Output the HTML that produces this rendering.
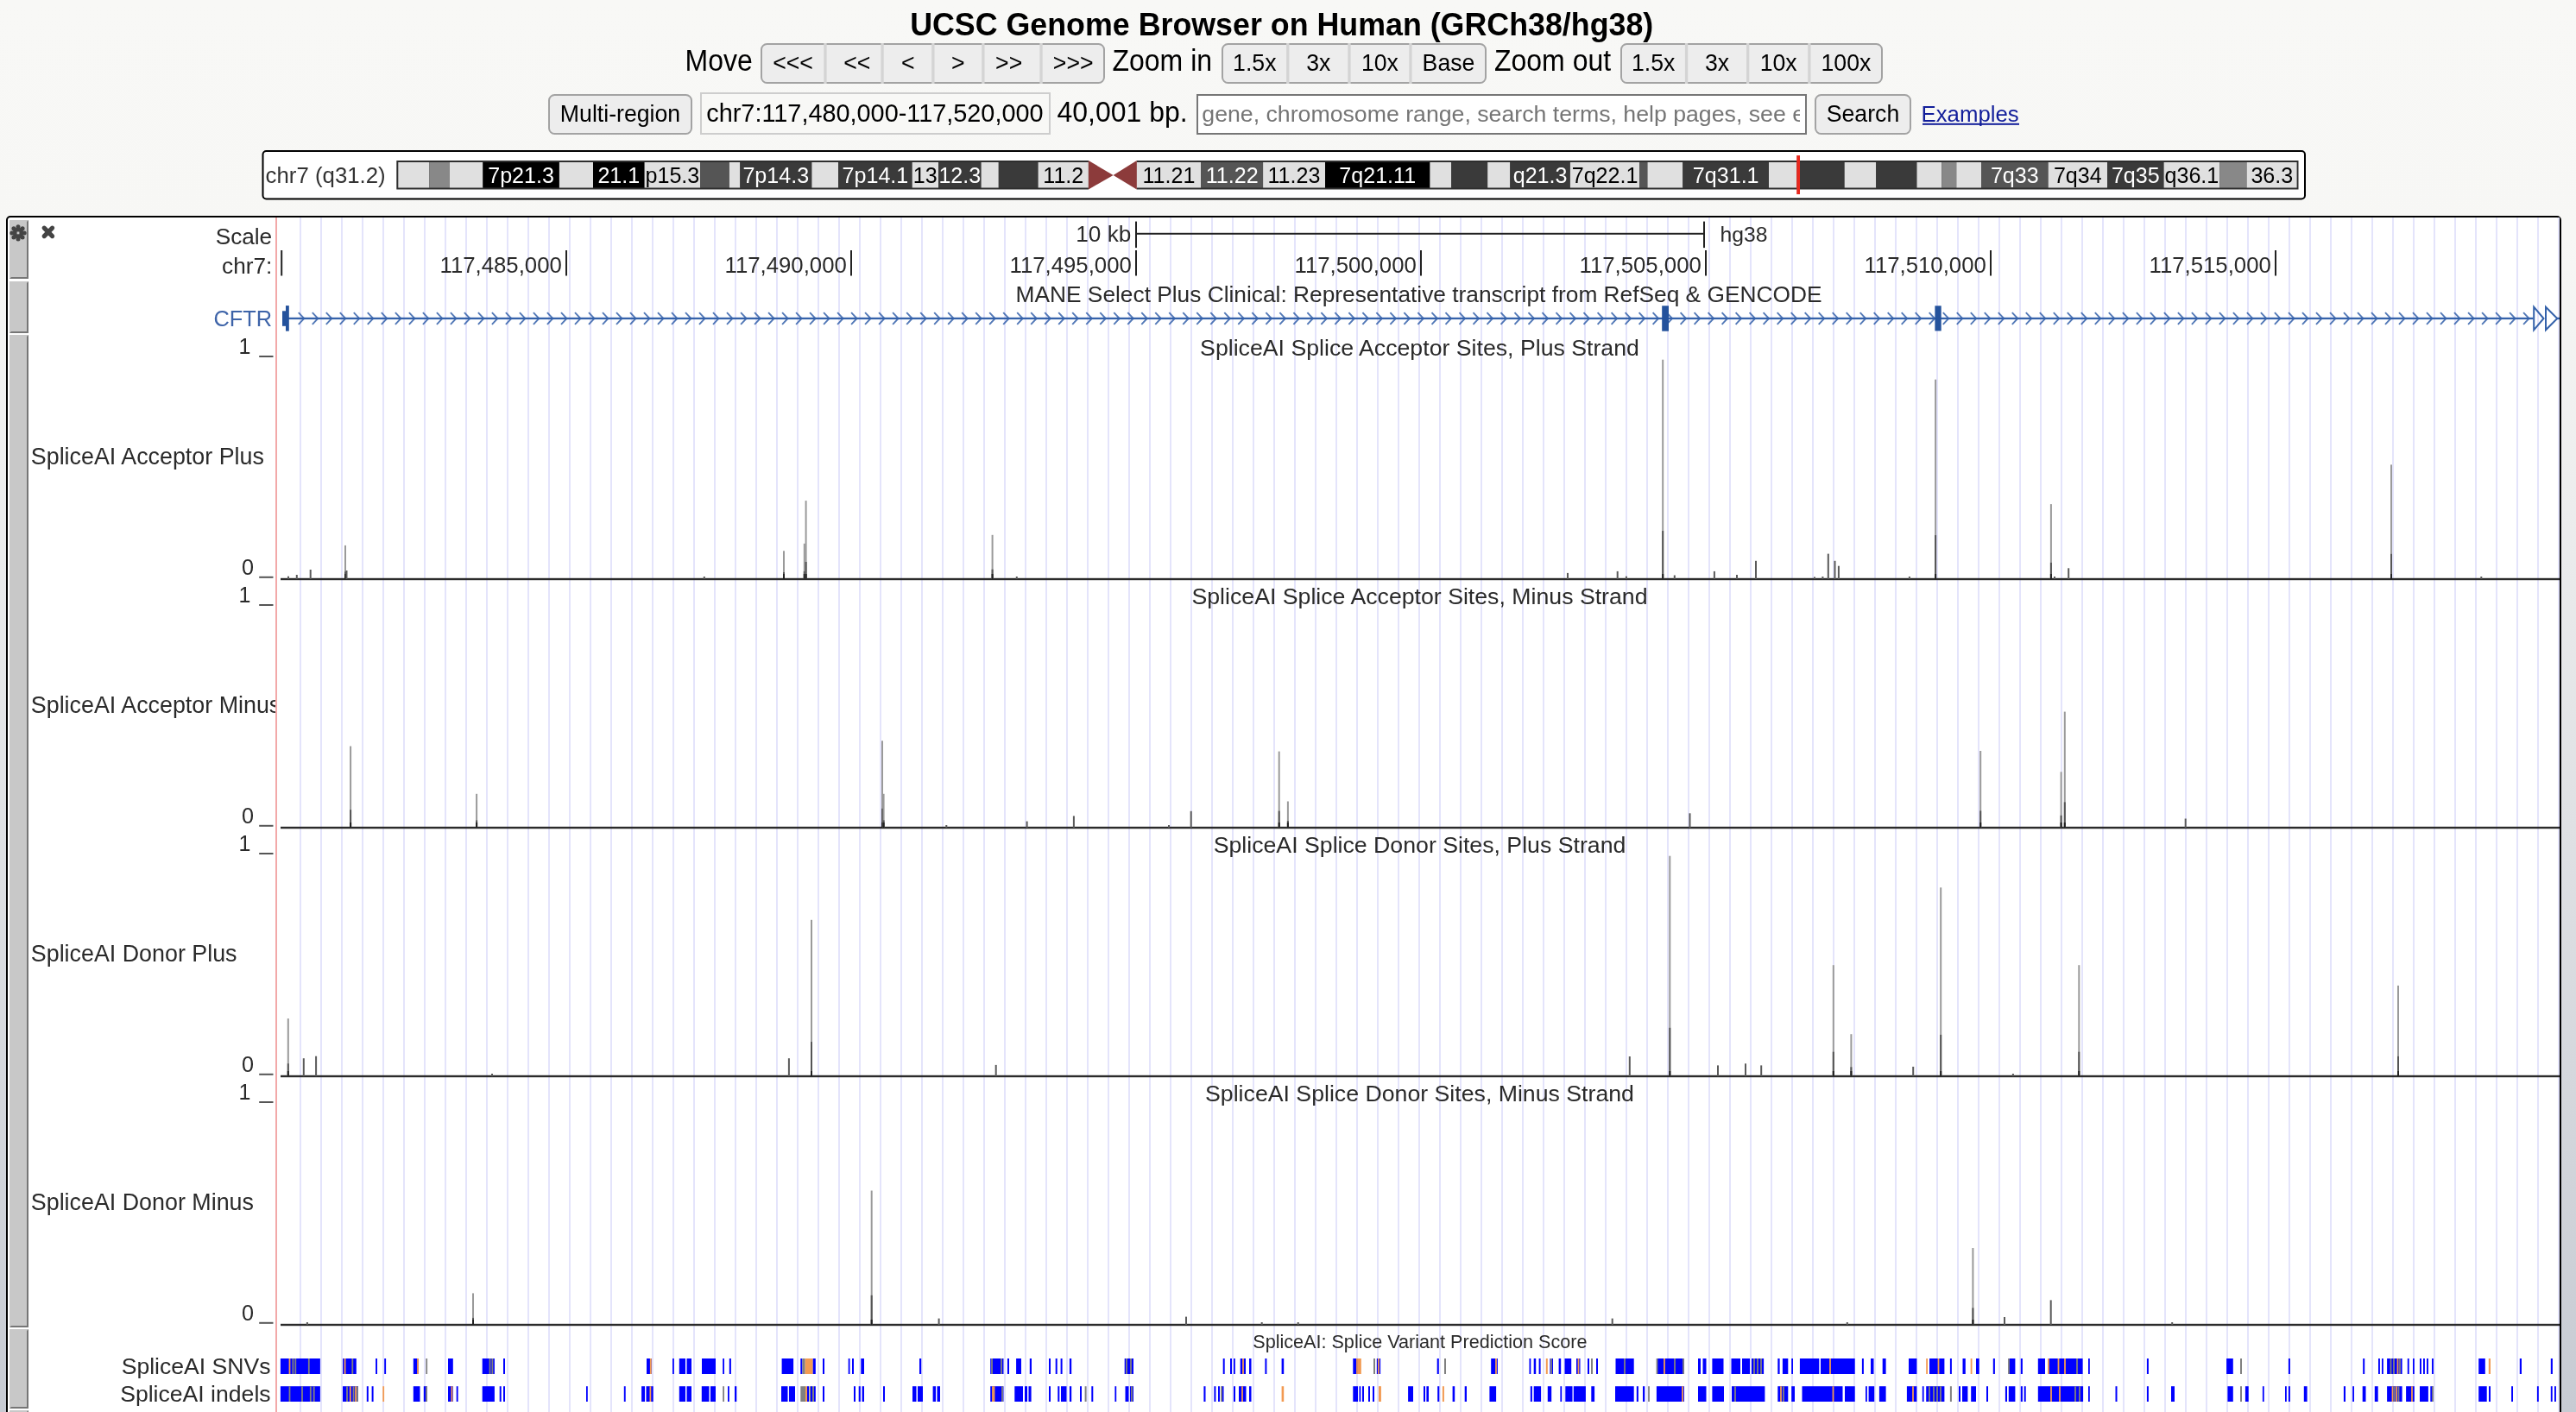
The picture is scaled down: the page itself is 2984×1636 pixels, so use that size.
<!DOCTYPE html><html><head><meta charset="utf-8"><title>UCSC Genome Browser</title>
<style>html,body{margin:0;padding:0;width:2984px;height:1636px;overflow:hidden;background:#f8f8f6;}svg{display:block;font-family:"Liberation Sans",sans-serif;will-change:transform;}</style></head><body>
<svg width="2984" height="1636" viewBox="0 0 2984 1636">
<defs><linearGradient id="bg" x1="0" y1="0" x2="0" y2="1636" gradientUnits="userSpaceOnUse"><stop offset="0" stop-color="#f8f8f6"/><stop offset="0.17" stop-color="#f7f7f5"/><stop offset="1" stop-color="#c7cbd3"/></linearGradient><clipPath id="srch"><rect x="1388" y="111" width="697" height="43"/></clipPath><clipPath id="lbl"><rect x="34" y="252" width="285" height="1400"/></clipPath></defs>
<rect x="0" y="0" width="2984" height="1636" fill="url(#bg)"/>
<text x="1484.7" y="41.3" font-size="35.8" fill="#000" text-anchor="middle" font-weight="bold"  transform="matrix(1,0,0,1.035,0,-1.445)">UCSC Genome Browser on Human (GRCh38/hg38)</text>
<text x="793.5" y="81.8" font-size="32" fill="#000" text-anchor="start" font-weight="normal"  transform="matrix(1,0,0,1.07,0,-5.726)">Move</text>
<rect x="882" y="51" width="397" height="45" rx="6.5" ry="6.5" fill="#ededed" stroke="#a3a3a3" stroke-width="2"/><rect x="954.3" y="50" width="3.3" height="47" fill="#d4d4d4"/><rect x="1020.4" y="50" width="3.3" height="47" fill="#d4d4d4"/><rect x="1079.2" y="50" width="3.3" height="47" fill="#d4d4d4"/><rect x="1137.2" y="50" width="3.3" height="47" fill="#d4d4d4"/><rect x="1204.4" y="50" width="3.3" height="47" fill="#d4d4d4"/><text x="918.5" y="82" font-size="26.67" fill="#000" text-anchor="middle" font-weight="normal"  transform="matrix(1,0,0,1.06,0,-4.920)">&lt;&lt;&lt;</text><text x="992.8" y="82" font-size="26.67" fill="#000" text-anchor="middle" font-weight="normal"  transform="matrix(1,0,0,1.06,0,-4.920)">&lt;&lt;</text><text x="1051.7" y="82" font-size="26.67" fill="#000" text-anchor="middle" font-weight="normal"  transform="matrix(1,0,0,1.06,0,-4.920)">&lt;</text><text x="1109.8" y="82" font-size="26.67" fill="#000" text-anchor="middle" font-weight="normal"  transform="matrix(1,0,0,1.06,0,-4.920)">&gt;</text><text x="1168.7" y="82" font-size="26.67" fill="#000" text-anchor="middle" font-weight="normal"  transform="matrix(1,0,0,1.06,0,-4.920)">&gt;&gt;</text><text x="1243.2" y="82" font-size="26.67" fill="#000" text-anchor="middle" font-weight="normal"  transform="matrix(1,0,0,1.06,0,-4.920)">&gt;&gt;&gt;</text>
<text x="1288.5" y="81.8" font-size="32" fill="#000" text-anchor="start" font-weight="normal"  transform="matrix(1,0,0,1.07,0,-5.726)">Zoom in</text>
<rect x="1416" y="51" width="305" height="45" rx="6.5" ry="6.5" fill="#ededed" stroke="#a3a3a3" stroke-width="2"/><rect x="1490.1" y="50" width="3.3" height="47" fill="#d4d4d4"/><rect x="1561.3" y="50" width="3.3" height="47" fill="#d4d4d4"/><rect x="1632.3" y="50" width="3.3" height="47" fill="#d4d4d4"/><text x="1453.3" y="82" font-size="26.67" fill="#000" text-anchor="middle" font-weight="normal"  transform="matrix(1,0,0,1.06,0,-4.920)">1.5x</text><text x="1527.3" y="82" font-size="26.67" fill="#000" text-anchor="middle" font-weight="normal"  transform="matrix(1,0,0,1.06,0,-4.920)">3x</text><text x="1598.4" y="82" font-size="26.67" fill="#000" text-anchor="middle" font-weight="normal"  transform="matrix(1,0,0,1.06,0,-4.920)">10x</text><text x="1678.0" y="82" font-size="26.67" fill="#000" text-anchor="middle" font-weight="normal"  transform="matrix(1,0,0,1.06,0,-4.920)">Base</text>
<text x="1731" y="81.8" font-size="32" fill="#000" text-anchor="start" font-weight="normal"  transform="matrix(1,0,0,1.07,0,-5.726)">Zoom out</text>
<rect x="1878" y="51" width="302" height="45" rx="6.5" ry="6.5" fill="#ededed" stroke="#a3a3a3" stroke-width="2"/><rect x="1951.9" y="50" width="3.3" height="47" fill="#d4d4d4"/><rect x="2023.0" y="50" width="3.3" height="47" fill="#d4d4d4"/><rect x="2094.2" y="50" width="3.3" height="47" fill="#d4d4d4"/><text x="1915.2" y="82" font-size="26.67" fill="#000" text-anchor="middle" font-weight="normal"  transform="matrix(1,0,0,1.06,0,-4.920)">1.5x</text><text x="1989.0" y="82" font-size="26.67" fill="#000" text-anchor="middle" font-weight="normal"  transform="matrix(1,0,0,1.06,0,-4.920)">3x</text><text x="2060.2" y="82" font-size="26.67" fill="#000" text-anchor="middle" font-weight="normal"  transform="matrix(1,0,0,1.06,0,-4.920)">10x</text><text x="2138.4" y="82" font-size="26.67" fill="#000" text-anchor="middle" font-weight="normal"  transform="matrix(1,0,0,1.06,0,-4.920)">100x</text>
<rect x="636" y="110" width="165" height="45" rx="6.5" ry="6.5" fill="#ededed" stroke="#a3a3a3" stroke-width="2"/><text x="718.5" y="141" font-size="26.67" fill="#000" text-anchor="middle" font-weight="normal"  transform="matrix(1,0,0,1.06,0,-8.460)">Multi-region</text>
<rect x="812" y="108" width="404" height="47" fill="#f8f8f6" stroke="#cdcdcd" stroke-width="2"/>
<text x="818.3" y="141.3" font-size="28.85" fill="#000" text-anchor="start" font-weight="normal" >chr7:117,480,000-117,520,000</text>
<text x="1224.5" y="141" font-size="32" fill="#000" text-anchor="start" font-weight="normal"  transform="matrix(1,0,0,1.06,0,-8.460)">40,001 bp.</text>
<rect x="1387" y="110" width="705" height="45" fill="#ffffff" stroke="#767676" stroke-width="2"/>
<g clip-path="url(#srch)"><text x="1392.3" y="141.3" font-size="26.7" fill="#757575" text-anchor="start" font-weight="normal" >gene, chromosome range, search terms, help pages, see examples</text></g>
<rect x="2103" y="110" width="110" height="45" rx="6.5" ry="6.5" fill="#ededed" stroke="#a3a3a3" stroke-width="2"/><text x="2158.0" y="141" font-size="26.67" fill="#000" text-anchor="middle" font-weight="normal"  transform="matrix(1,0,0,1.06,0,-8.460)">Search</text>
<text x="2225.5" y="141" font-size="25.8" fill="#121e9a" text-anchor="start" font-weight="normal"  transform="matrix(1,0,0,1.03,0,-4.230)">Examples</text>
<rect x="2227" y="142.8" width="112" height="2" fill="#121e9a"/>
<rect x="304.5" y="175" width="2365.5" height="55.5" rx="4" ry="4" fill="#ffffff" stroke="#000" stroke-width="2"/>
<text x="307.6" y="211.6" font-size="25.8" fill="#333" text-anchor="start" font-weight="normal" >chr7 (q31.2)</text>
<rect x="459.3" y="186" width="801.6000000000001" height="33.5" fill="#2e2e2e"/>
<rect x="1316.8" y="186" width="1345.7" height="33.5" fill="#2e2e2e"/>
<rect x="461.3" y="188" width="36.0" height="29.5" fill="#e0e0e0"/>
<rect x="497.3" y="188" width="23.6" height="29.5" fill="#888888"/>
<rect x="520.9" y="188" width="38.5" height="29.5" fill="#e0e0e0"/>
<rect x="559.4" y="188" width="88.5" height="29.5" fill="#000000"/>
<text x="603.6" y="211.6" font-size="25.1" fill="#fff" text-anchor="middle" font-weight="normal" >7p21.3</text>
<rect x="647.9" y="188" width="39.1" height="29.5" fill="#e0e0e0"/>
<rect x="687" y="188" width="59.6" height="29.5" fill="#000000"/>
<text x="716.8" y="211.6" font-size="25.1" fill="#fff" text-anchor="middle" font-weight="normal" >21.1</text>
<rect x="746.6" y="188" width="64.6" height="29.5" fill="#e0e0e0"/>
<text x="778.9" y="211.6" font-size="25.1" fill="#000" text-anchor="middle" font-weight="normal" >p15.3</text>
<rect x="811.2" y="188" width="33.7" height="29.5" fill="#555555"/>
<rect x="844.9" y="188" width="12.4" height="29.5" fill="#e0e0e0"/>
<rect x="857.3" y="188" width="83.1" height="29.5" fill="#3a3a3a"/>
<text x="898.8" y="211.6" font-size="25.1" fill="#fff" text-anchor="middle" font-weight="normal" >7p14.3</text>
<rect x="940.4" y="188" width="30.7" height="29.5" fill="#e0e0e0"/>
<rect x="971.1" y="188" width="85.6" height="29.5" fill="#3a3a3a"/>
<text x="1013.9" y="211.6" font-size="25.1" fill="#fff" text-anchor="middle" font-weight="normal" >7p14.1</text>
<rect x="1056.7" y="188" width="30.3" height="29.5" fill="#e0e0e0"/>
<text x="1071.8" y="211.6" font-size="25.1" fill="#000" text-anchor="middle" font-weight="normal" >13</text>
<rect x="1087" y="188" width="49.6" height="29.5" fill="#3a3a3a"/>
<text x="1111.8" y="211.6" font-size="25.1" fill="#fff" text-anchor="middle" font-weight="normal" >12.3</text>
<rect x="1136.6" y="188" width="20.2" height="29.5" fill="#e0e0e0"/>
<rect x="1156.8" y="188" width="45.8" height="29.5" fill="#3a3a3a"/>
<rect x="1202.6" y="188" width="58.3" height="29.5" fill="#e0e0e0"/>
<text x="1231.8" y="211.6" font-size="25.1" fill="#000" text-anchor="middle" font-weight="normal" >11.2</text>
<rect x="1316.8" y="188" width="74.4" height="29.5" fill="#e0e0e0"/>
<text x="1354.0" y="211.6" font-size="25.1" fill="#000" text-anchor="middle" font-weight="normal" >11.21</text>
<rect x="1391.2" y="188" width="71.9" height="29.5" fill="#555555"/>
<text x="1427.2" y="211.6" font-size="25.1" fill="#fff" text-anchor="middle" font-weight="normal" >11.22</text>
<rect x="1463.1" y="188" width="71.9" height="29.5" fill="#e0e0e0"/>
<text x="1499.0" y="211.6" font-size="25.1" fill="#000" text-anchor="middle" font-weight="normal" >11.23</text>
<rect x="1535" y="188" width="121.4" height="29.5" fill="#000000"/>
<text x="1595.7" y="211.6" font-size="25.1" fill="#fff" text-anchor="middle" font-weight="normal" >7q21.11</text>
<rect x="1656.4" y="188" width="24.8" height="29.5" fill="#e0e0e0"/>
<rect x="1681.2" y="188" width="42.0" height="29.5" fill="#3a3a3a"/>
<rect x="1723.2" y="188" width="26.1" height="29.5" fill="#e0e0e0"/>
<rect x="1749.3" y="188" width="69.6" height="29.5" fill="#3a3a3a"/>
<text x="1784.1" y="211.6" font-size="25.1" fill="#fff" text-anchor="middle" font-weight="normal" >q21.3</text>
<rect x="1818.9" y="188" width="80.3" height="29.5" fill="#e0e0e0"/>
<text x="1859.1" y="211.6" font-size="25.1" fill="#000" text-anchor="middle" font-weight="normal" >7q22.1</text>
<rect x="1899.2" y="188" width="9.3" height="29.5" fill="#555555"/>
<rect x="1908.5" y="188" width="40.8" height="29.5" fill="#e0e0e0"/>
<rect x="1949.3" y="188" width="99.7" height="29.5" fill="#3a3a3a"/>
<text x="1999.2" y="211.6" font-size="25.1" fill="#fff" text-anchor="middle" font-weight="normal" >7q31.1</text>
<rect x="2049" y="188" width="32.6" height="29.5" fill="#e0e0e0"/>
<rect x="2081.6" y="188" width="55.1" height="29.5" fill="#3a3a3a"/>
<rect x="2136.7" y="188" width="36.5" height="29.5" fill="#e0e0e0"/>
<rect x="2173.2" y="188" width="47.3" height="29.5" fill="#3a3a3a"/>
<rect x="2220.5" y="188" width="28.8" height="29.5" fill="#e0e0e0"/>
<rect x="2249.3" y="188" width="17.0" height="29.5" fill="#888888"/>
<rect x="2266.3" y="188" width="28.7" height="29.5" fill="#e0e0e0"/>
<rect x="2295" y="188" width="77.7" height="29.5" fill="#555555"/>
<text x="2333.8" y="211.6" font-size="25.1" fill="#fff" text-anchor="middle" font-weight="normal" >7q33</text>
<rect x="2372.7" y="188" width="68.3" height="29.5" fill="#e0e0e0"/>
<text x="2406.8" y="211.6" font-size="25.1" fill="#000" text-anchor="middle" font-weight="normal" >7q34</text>
<rect x="2441" y="188" width="65.6" height="29.5" fill="#3a3a3a"/>
<text x="2473.8" y="211.6" font-size="25.1" fill="#fff" text-anchor="middle" font-weight="normal" >7q35</text>
<rect x="2506.6" y="188" width="64.6" height="29.5" fill="#e0e0e0"/>
<text x="2538.9" y="211.6" font-size="25.1" fill="#000" text-anchor="middle" font-weight="normal" >q36.1</text>
<rect x="2571.2" y="188" width="31.4" height="29.5" fill="#888888"/>
<rect x="2602.6" y="188" width="58.0" height="29.5" fill="#e0e0e0"/>
<text x="2631.8" y="211.6" font-size="25.1" fill="#000" text-anchor="middle" font-weight="normal" >36.3</text>
<polygon points="1260.9,186 1289.6,203 1260.9,219.5" fill="#8c3b3b"/>
<polygon points="1316.8,186 1289.6,203 1316.8,219.5" fill="#8c3b3b"/>
<rect x="2081.2" y="180.1" width="3.8" height="45" fill="#e8281e"/>
<rect x="8" y="251" width="2958" height="1406" rx="4" ry="4" fill="#ffffff" stroke="#000" stroke-width="2"/>
<rect x="11" y="255" width="22" height="68" fill="#c8c8c8"/>
<polygon points="31,257 33,255 33,323 31,323" fill="#767676"/>
<polygon points="11,323 13,321 33,321 33,323" fill="#767676"/>
<rect x="11" y="326" width="22" height="60" fill="#c8c8c8"/>
<polygon points="31,328 33,326 33,386 31,386" fill="#767676"/>
<polygon points="11,386 13,384 33,384 33,386" fill="#767676"/>
<rect x="11" y="388" width="22" height="1150" fill="#c8c8c8"/>
<polygon points="31,390 33,388 33,1538 31,1538" fill="#767676"/>
<polygon points="11,1538 13,1536 33,1536 33,1538" fill="#767676"/>
<rect x="11" y="1540" width="22" height="92" fill="#c8c8c8"/>
<polygon points="31,1542 33,1540 33,1632 31,1632" fill="#767676"/>
<polygon points="11,1632 13,1630 33,1630 33,1632" fill="#767676"/>
<rect x="11" y="1634" width="22" height="66" fill="#c8c8c8"/>
<polygon points="31,1636 33,1634 33,1700 31,1700" fill="#767676"/>
<polygon points="11,1700 13,1698 33,1698 33,1700" fill="#767676"/>
<circle cx="21" cy="269.9" r="6.4" fill="#444"/><circle cx="21.00" cy="262.70" r="2.5" fill="#444"/><circle cx="26.09" cy="264.81" r="2.5" fill="#444"/><circle cx="28.20" cy="269.90" r="2.5" fill="#444"/><circle cx="26.09" cy="274.99" r="2.5" fill="#444"/><circle cx="21.00" cy="277.10" r="2.5" fill="#444"/><circle cx="15.91" cy="274.99" r="2.5" fill="#444"/><circle cx="13.80" cy="269.90" r="2.5" fill="#444"/><circle cx="15.91" cy="264.81" r="2.5" fill="#444"/><rect x="19.6" y="268.5" width="2.8" height="2.8" fill="#c8c8c8"/>
<path d="M51.2,264.2 L60.6,273.6 M60.6,264.2 L51.2,273.6" stroke="#444" stroke-width="5.2" stroke-linecap="round"/>
<rect x="347" y="252" width="2" height="1400" fill="#e4e4fb"/><rect x="371" y="252" width="2" height="1400" fill="#e4e4fb"/><rect x="395" y="252" width="2" height="1400" fill="#e4e4fb"/><rect x="419" y="252" width="2" height="1400" fill="#e4e4fb"/><rect x="443" y="252" width="2" height="1400" fill="#e4e4fb"/><rect x="467" y="252" width="2" height="1400" fill="#e4e4fb"/><rect x="491" y="252" width="2" height="1400" fill="#e4e4fb"/><rect x="515" y="252" width="2" height="1400" fill="#e4e4fb"/><rect x="539" y="252" width="2" height="1400" fill="#e4e4fb"/><rect x="563" y="252" width="2" height="1400" fill="#e4e4fb"/><rect x="587" y="252" width="2" height="1400" fill="#e4e4fb"/><rect x="611" y="252" width="2" height="1400" fill="#e4e4fb"/><rect x="635" y="252" width="2" height="1400" fill="#e4e4fb"/><rect x="659" y="252" width="2" height="1400" fill="#e4e4fb"/><rect x="683" y="252" width="2" height="1400" fill="#e4e4fb"/><rect x="707" y="252" width="2" height="1400" fill="#e4e4fb"/><rect x="731" y="252" width="2" height="1400" fill="#e4e4fb"/><rect x="755" y="252" width="2" height="1400" fill="#e4e4fb"/><rect x="779" y="252" width="2" height="1400" fill="#e4e4fb"/><rect x="803" y="252" width="2" height="1400" fill="#e4e4fb"/><rect x="827" y="252" width="2" height="1400" fill="#e4e4fb"/><rect x="851" y="252" width="2" height="1400" fill="#e4e4fb"/><rect x="875" y="252" width="2" height="1400" fill="#e4e4fb"/><rect x="899" y="252" width="2" height="1400" fill="#e4e4fb"/><rect x="923" y="252" width="2" height="1400" fill="#e4e4fb"/><rect x="947" y="252" width="2" height="1400" fill="#e4e4fb"/><rect x="971" y="252" width="2" height="1400" fill="#e4e4fb"/><rect x="995" y="252" width="2" height="1400" fill="#e4e4fb"/><rect x="1019" y="252" width="2" height="1400" fill="#e4e4fb"/><rect x="1043" y="252" width="2" height="1400" fill="#e4e4fb"/><rect x="1067" y="252" width="2" height="1400" fill="#e4e4fb"/><rect x="1091" y="252" width="2" height="1400" fill="#e4e4fb"/><rect x="1115" y="252" width="2" height="1400" fill="#e4e4fb"/><rect x="1139" y="252" width="2" height="1400" fill="#e4e4fb"/><rect x="1163" y="252" width="2" height="1400" fill="#e4e4fb"/><rect x="1187" y="252" width="2" height="1400" fill="#e4e4fb"/><rect x="1211" y="252" width="2" height="1400" fill="#e4e4fb"/><rect x="1235" y="252" width="2" height="1400" fill="#e4e4fb"/><rect x="1259" y="252" width="2" height="1400" fill="#e4e4fb"/><rect x="1283" y="252" width="2" height="1400" fill="#e4e4fb"/><rect x="1307" y="252" width="2" height="1400" fill="#e4e4fb"/><rect x="1331" y="252" width="2" height="1400" fill="#e4e4fb"/><rect x="1355" y="252" width="2" height="1400" fill="#e4e4fb"/><rect x="1379" y="252" width="2" height="1400" fill="#e4e4fb"/><rect x="1403" y="252" width="2" height="1400" fill="#e4e4fb"/><rect x="1427" y="252" width="2" height="1400" fill="#e4e4fb"/><rect x="1451" y="252" width="2" height="1400" fill="#e4e4fb"/><rect x="1475" y="252" width="2" height="1400" fill="#e4e4fb"/><rect x="1499" y="252" width="2" height="1400" fill="#e4e4fb"/><rect x="1523" y="252" width="2" height="1400" fill="#e4e4fb"/><rect x="1547" y="252" width="2" height="1400" fill="#e4e4fb"/><rect x="1571" y="252" width="2" height="1400" fill="#e4e4fb"/><rect x="1595" y="252" width="2" height="1400" fill="#e4e4fb"/><rect x="1619" y="252" width="2" height="1400" fill="#e4e4fb"/><rect x="1643" y="252" width="2" height="1400" fill="#e4e4fb"/><rect x="1667" y="252" width="2" height="1400" fill="#e4e4fb"/><rect x="1691" y="252" width="2" height="1400" fill="#e4e4fb"/><rect x="1715" y="252" width="2" height="1400" fill="#e4e4fb"/><rect x="1739" y="252" width="2" height="1400" fill="#e4e4fb"/><rect x="1763" y="252" width="2" height="1400" fill="#e4e4fb"/><rect x="1787" y="252" width="2" height="1400" fill="#e4e4fb"/><rect x="1811" y="252" width="2" height="1400" fill="#e4e4fb"/><rect x="1835" y="252" width="2" height="1400" fill="#e4e4fb"/><rect x="1859" y="252" width="2" height="1400" fill="#e4e4fb"/><rect x="1883" y="252" width="2" height="1400" fill="#e4e4fb"/><rect x="1907" y="252" width="2" height="1400" fill="#e4e4fb"/><rect x="1931" y="252" width="2" height="1400" fill="#e4e4fb"/><rect x="1955" y="252" width="2" height="1400" fill="#e4e4fb"/><rect x="1979" y="252" width="2" height="1400" fill="#e4e4fb"/><rect x="2003" y="252" width="2" height="1400" fill="#e4e4fb"/><rect x="2027" y="252" width="2" height="1400" fill="#e4e4fb"/><rect x="2051" y="252" width="2" height="1400" fill="#e4e4fb"/><rect x="2075" y="252" width="2" height="1400" fill="#e4e4fb"/><rect x="2099" y="252" width="2" height="1400" fill="#e4e4fb"/><rect x="2123" y="252" width="2" height="1400" fill="#e4e4fb"/><rect x="2147" y="252" width="2" height="1400" fill="#e4e4fb"/><rect x="2171" y="252" width="2" height="1400" fill="#e4e4fb"/><rect x="2195" y="252" width="2" height="1400" fill="#e4e4fb"/><rect x="2219" y="252" width="2" height="1400" fill="#e4e4fb"/><rect x="2243" y="252" width="2" height="1400" fill="#e4e4fb"/><rect x="2267" y="252" width="2" height="1400" fill="#e4e4fb"/><rect x="2291" y="252" width="2" height="1400" fill="#e4e4fb"/><rect x="2315" y="252" width="2" height="1400" fill="#e4e4fb"/><rect x="2339" y="252" width="2" height="1400" fill="#e4e4fb"/><rect x="2363" y="252" width="2" height="1400" fill="#e4e4fb"/><rect x="2387" y="252" width="2" height="1400" fill="#e4e4fb"/><rect x="2411" y="252" width="2" height="1400" fill="#e4e4fb"/><rect x="2435" y="252" width="2" height="1400" fill="#e4e4fb"/><rect x="2459" y="252" width="2" height="1400" fill="#e4e4fb"/><rect x="2483" y="252" width="2" height="1400" fill="#e4e4fb"/><rect x="2507" y="252" width="2" height="1400" fill="#e4e4fb"/><rect x="2531" y="252" width="2" height="1400" fill="#e4e4fb"/><rect x="2555" y="252" width="2" height="1400" fill="#e4e4fb"/><rect x="2579" y="252" width="2" height="1400" fill="#e4e4fb"/><rect x="2603" y="252" width="2" height="1400" fill="#e4e4fb"/><rect x="2627" y="252" width="2" height="1400" fill="#e4e4fb"/><rect x="2651" y="252" width="2" height="1400" fill="#e4e4fb"/><rect x="2675" y="252" width="2" height="1400" fill="#e4e4fb"/><rect x="2699" y="252" width="2" height="1400" fill="#e4e4fb"/><rect x="2723" y="252" width="2" height="1400" fill="#e4e4fb"/><rect x="2747" y="252" width="2" height="1400" fill="#e4e4fb"/><rect x="2771" y="252" width="2" height="1400" fill="#e4e4fb"/><rect x="2795" y="252" width="2" height="1400" fill="#e4e4fb"/><rect x="2819" y="252" width="2" height="1400" fill="#e4e4fb"/><rect x="2843" y="252" width="2" height="1400" fill="#e4e4fb"/><rect x="2867" y="252" width="2" height="1400" fill="#e4e4fb"/><rect x="2891" y="252" width="2" height="1400" fill="#e4e4fb"/><rect x="2915" y="252" width="2" height="1400" fill="#e4e4fb"/><rect x="2939" y="252" width="2" height="1400" fill="#e4e4fb"/><rect x="2963" y="252" width="2" height="1400" fill="#e4e4fb"/>
<rect x="319" y="252" width="2" height="1400" fill="#f2a9a9"/>
<text x="315.2" y="282.6" font-size="26.2" fill="#2a2a2a" text-anchor="end" font-weight="normal" >Scale</text>
<text x="315.3" y="317" font-size="26.2" fill="#2a2a2a" text-anchor="end" font-weight="normal" >chr7:</text>
<rect x="325.2" y="290" width="2" height="29.5" fill="#222"/>
<rect x="655" y="290" width="2" height="29.5" fill="#222"/>
<text x="650.8" y="316.3" font-size="25.75" fill="#2a2a2a" text-anchor="end" font-weight="normal" >117,485,000</text>
<rect x="985" y="290" width="2" height="29.5" fill="#222"/>
<text x="980.8" y="316.3" font-size="25.75" fill="#2a2a2a" text-anchor="end" font-weight="normal" >117,490,000</text>
<rect x="1315" y="290" width="2" height="29.5" fill="#222"/>
<text x="1310.8" y="316.3" font-size="25.75" fill="#2a2a2a" text-anchor="end" font-weight="normal" >117,495,000</text>
<rect x="1645" y="290" width="2" height="29.5" fill="#222"/>
<text x="1640.8" y="316.3" font-size="25.75" fill="#2a2a2a" text-anchor="end" font-weight="normal" >117,500,000</text>
<rect x="1975" y="290" width="2" height="29.5" fill="#222"/>
<text x="1970.8" y="316.3" font-size="25.75" fill="#2a2a2a" text-anchor="end" font-weight="normal" >117,505,000</text>
<rect x="2305" y="290" width="2" height="29.5" fill="#222"/>
<text x="2300.8" y="316.3" font-size="25.75" fill="#2a2a2a" text-anchor="end" font-weight="normal" >117,510,000</text>
<rect x="2635" y="290" width="2" height="29.5" fill="#222"/>
<text x="2630.8" y="316.3" font-size="25.75" fill="#2a2a2a" text-anchor="end" font-weight="normal" >117,515,000</text>
<rect x="1315" y="256.6" width="2" height="30.5" fill="#222"/>
<rect x="1973" y="256.6" width="2" height="30.5" fill="#222"/>
<rect x="1315" y="269.8" width="660" height="2" fill="#222"/>
<text x="1310.3" y="279.5" font-size="26.2" fill="#2a2a2a" text-anchor="end" font-weight="normal" >10 kb</text>
<text x="1992.5" y="279.5" font-size="24.7" fill="#2a2a2a" text-anchor="start" font-weight="normal" >hg38</text>
<text x="1643.5" y="349.7" font-size="26.3" fill="#2a2a2a" text-anchor="middle" font-weight="normal" >MANE Select Plus Clinical: Representative transcript from RefSeq &amp; GENCODE</text>
<text x="315.2" y="377.8" font-size="25.4" fill="#3d63a8" text-anchor="end" font-weight="normal" >CFTR</text>
<rect x="327" y="367.8" width="2607.5" height="2.3" fill="#3562aa"/>
<path d="M345.8,362.2 L352.3,369 L345.8,375.8 M361.8,362.2 L368.3,369 L361.8,375.8 M377.8,362.2 L384.3,369 L377.8,375.8 M393.8,362.2 L400.3,369 L393.8,375.8 M409.8,362.2 L416.3,369 L409.8,375.8 M425.8,362.2 L432.3,369 L425.8,375.8 M441.8,362.2 L448.3,369 L441.8,375.8 M457.9,362.2 L464.4,369 L457.9,375.8 M473.9,362.2 L480.4,369 L473.9,375.8 M489.9,362.2 L496.4,369 L489.9,375.8 M505.9,362.2 L512.4,369 L505.9,375.8 M521.9,362.2 L528.4,369 L521.9,375.8 M537.9,362.2 L544.4,369 L537.9,375.8 M553.9,362.2 L560.4,369 L553.9,375.8 M569.9,362.2 L576.4,369 L569.9,375.8 M585.9,362.2 L592.4,369 L585.9,375.8 M601.9,362.2 L608.4,369 L601.9,375.8 M617.9,362.2 L624.4,369 L617.9,375.8 M633.9,362.2 L640.4,369 L633.9,375.8 M650.0,362.2 L656.5,369 L650.0,375.8 M666.0,362.2 L672.5,369 L666.0,375.8 M682.0,362.2 L688.5,369 L682.0,375.8 M698.0,362.2 L704.5,369 L698.0,375.8 M714.0,362.2 L720.5,369 L714.0,375.8 M730.0,362.2 L736.5,369 L730.0,375.8 M746.0,362.2 L752.5,369 L746.0,375.8 M762.0,362.2 L768.5,369 L762.0,375.8 M778.0,362.2 L784.5,369 L778.0,375.8 M794.0,362.2 L800.5,369 L794.0,375.8 M810.0,362.2 L816.5,369 L810.0,375.8 M826.0,362.2 L832.5,369 L826.0,375.8 M842.0,362.2 L848.5,369 L842.0,375.8 M858.1,362.2 L864.6,369 L858.1,375.8 M874.1,362.2 L880.6,369 L874.1,375.8 M890.1,362.2 L896.6,369 L890.1,375.8 M906.1,362.2 L912.6,369 L906.1,375.8 M922.1,362.2 L928.6,369 L922.1,375.8 M938.1,362.2 L944.6,369 L938.1,375.8 M954.1,362.2 L960.6,369 L954.1,375.8 M970.1,362.2 L976.6,369 L970.1,375.8 M986.1,362.2 L992.6,369 L986.1,375.8 M1002.1,362.2 L1008.6,369 L1002.1,375.8 M1018.1,362.2 L1024.6,369 L1018.1,375.8 M1034.1,362.2 L1040.6,369 L1034.1,375.8 M1050.2,362.2 L1056.7,369 L1050.2,375.8 M1066.2,362.2 L1072.7,369 L1066.2,375.8 M1082.2,362.2 L1088.7,369 L1082.2,375.8 M1098.2,362.2 L1104.7,369 L1098.2,375.8 M1114.2,362.2 L1120.7,369 L1114.2,375.8 M1130.2,362.2 L1136.7,369 L1130.2,375.8 M1146.2,362.2 L1152.7,369 L1146.2,375.8 M1162.2,362.2 L1168.7,369 L1162.2,375.8 M1178.2,362.2 L1184.7,369 L1178.2,375.8 M1194.2,362.2 L1200.7,369 L1194.2,375.8 M1210.2,362.2 L1216.7,369 L1210.2,375.8 M1226.2,362.2 L1232.7,369 L1226.2,375.8 M1242.2,362.2 L1248.7,369 L1242.2,375.8 M1258.3,362.2 L1264.8,369 L1258.3,375.8 M1274.3,362.2 L1280.8,369 L1274.3,375.8 M1290.3,362.2 L1296.8,369 L1290.3,375.8 M1306.3,362.2 L1312.8,369 L1306.3,375.8 M1322.3,362.2 L1328.8,369 L1322.3,375.8 M1338.3,362.2 L1344.8,369 L1338.3,375.8 M1354.3,362.2 L1360.8,369 L1354.3,375.8 M1370.3,362.2 L1376.8,369 L1370.3,375.8 M1386.3,362.2 L1392.8,369 L1386.3,375.8 M1402.3,362.2 L1408.8,369 L1402.3,375.8 M1418.3,362.2 L1424.8,369 L1418.3,375.8 M1434.3,362.2 L1440.8,369 L1434.3,375.8 M1450.4,362.2 L1456.9,369 L1450.4,375.8 M1466.4,362.2 L1472.9,369 L1466.4,375.8 M1482.4,362.2 L1488.9,369 L1482.4,375.8 M1498.4,362.2 L1504.9,369 L1498.4,375.8 M1514.4,362.2 L1520.9,369 L1514.4,375.8 M1530.4,362.2 L1536.9,369 L1530.4,375.8 M1546.4,362.2 L1552.9,369 L1546.4,375.8 M1562.4,362.2 L1568.9,369 L1562.4,375.8 M1578.4,362.2 L1584.9,369 L1578.4,375.8 M1594.4,362.2 L1600.9,369 L1594.4,375.8 M1610.4,362.2 L1616.9,369 L1610.4,375.8 M1626.4,362.2 L1632.9,369 L1626.4,375.8 M1642.4,362.2 L1648.9,369 L1642.4,375.8 M1658.5,362.2 L1665.0,369 L1658.5,375.8 M1674.5,362.2 L1681.0,369 L1674.5,375.8 M1690.5,362.2 L1697.0,369 L1690.5,375.8 M1706.5,362.2 L1713.0,369 L1706.5,375.8 M1722.5,362.2 L1729.0,369 L1722.5,375.8 M1738.5,362.2 L1745.0,369 L1738.5,375.8 M1754.5,362.2 L1761.0,369 L1754.5,375.8 M1770.5,362.2 L1777.0,369 L1770.5,375.8 M1786.5,362.2 L1793.0,369 L1786.5,375.8 M1802.5,362.2 L1809.0,369 L1802.5,375.8 M1818.5,362.2 L1825.0,369 L1818.5,375.8 M1834.5,362.2 L1841.0,369 L1834.5,375.8 M1850.6,362.2 L1857.1,369 L1850.6,375.8 M1866.6,362.2 L1873.1,369 L1866.6,375.8 M1882.6,362.2 L1889.1,369 L1882.6,375.8 M1898.6,362.2 L1905.1,369 L1898.6,375.8 M1914.6,362.2 L1921.1,369 L1914.6,375.8 M1930.6,362.2 L1937.1,369 L1930.6,375.8 M1946.6,362.2 L1953.1,369 L1946.6,375.8 M1962.6,362.2 L1969.1,369 L1962.6,375.8 M1978.6,362.2 L1985.1,369 L1978.6,375.8 M1994.6,362.2 L2001.1,369 L1994.6,375.8 M2010.6,362.2 L2017.1,369 L2010.6,375.8 M2026.6,362.2 L2033.1,369 L2026.6,375.8 M2042.6,362.2 L2049.1,369 L2042.6,375.8 M2058.7,362.2 L2065.2,369 L2058.7,375.8 M2074.7,362.2 L2081.2,369 L2074.7,375.8 M2090.7,362.2 L2097.2,369 L2090.7,375.8 M2106.7,362.2 L2113.2,369 L2106.7,375.8 M2122.7,362.2 L2129.2,369 L2122.7,375.8 M2138.7,362.2 L2145.2,369 L2138.7,375.8 M2154.7,362.2 L2161.2,369 L2154.7,375.8 M2170.7,362.2 L2177.2,369 L2170.7,375.8 M2186.7,362.2 L2193.2,369 L2186.7,375.8 M2202.7,362.2 L2209.2,369 L2202.7,375.8 M2218.7,362.2 L2225.2,369 L2218.7,375.8 M2234.7,362.2 L2241.2,369 L2234.7,375.8 M2250.8,362.2 L2257.3,369 L2250.8,375.8 M2266.8,362.2 L2273.3,369 L2266.8,375.8 M2282.8,362.2 L2289.3,369 L2282.8,375.8 M2298.8,362.2 L2305.3,369 L2298.8,375.8 M2314.8,362.2 L2321.3,369 L2314.8,375.8 M2330.8,362.2 L2337.3,369 L2330.8,375.8 M2346.8,362.2 L2353.3,369 L2346.8,375.8 M2362.8,362.2 L2369.3,369 L2362.8,375.8 M2378.8,362.2 L2385.3,369 L2378.8,375.8 M2394.8,362.2 L2401.3,369 L2394.8,375.8 M2410.8,362.2 L2417.3,369 L2410.8,375.8 M2426.8,362.2 L2433.3,369 L2426.8,375.8 M2442.8,362.2 L2449.3,369 L2442.8,375.8 M2458.9,362.2 L2465.4,369 L2458.9,375.8 M2474.9,362.2 L2481.4,369 L2474.9,375.8 M2490.9,362.2 L2497.4,369 L2490.9,375.8 M2506.9,362.2 L2513.4,369 L2506.9,375.8 M2522.9,362.2 L2529.4,369 L2522.9,375.8 M2538.9,362.2 L2545.4,369 L2538.9,375.8 M2554.9,362.2 L2561.4,369 L2554.9,375.8 M2570.9,362.2 L2577.4,369 L2570.9,375.8 M2586.9,362.2 L2593.4,369 L2586.9,375.8 M2602.9,362.2 L2609.4,369 L2602.9,375.8 M2618.9,362.2 L2625.4,369 L2618.9,375.8 M2634.9,362.2 L2641.4,369 L2634.9,375.8 M2651.0,362.2 L2657.5,369 L2651.0,375.8 M2667.0,362.2 L2673.5,369 L2667.0,375.8 M2683.0,362.2 L2689.5,369 L2683.0,375.8 M2699.0,362.2 L2705.5,369 L2699.0,375.8 M2715.0,362.2 L2721.5,369 L2715.0,375.8 M2731.0,362.2 L2737.5,369 L2731.0,375.8 M2747.0,362.2 L2753.5,369 L2747.0,375.8 M2763.0,362.2 L2769.5,369 L2763.0,375.8 M2779.0,362.2 L2785.5,369 L2779.0,375.8 M2795.0,362.2 L2801.5,369 L2795.0,375.8 M2811.0,362.2 L2817.5,369 L2811.0,375.8 M2827.0,362.2 L2833.5,369 L2827.0,375.8 M2843.0,362.2 L2849.5,369 L2843.0,375.8 M2859.1,362.2 L2865.6,369 L2859.1,375.8 M2875.1,362.2 L2881.6,369 L2875.1,375.8 M2891.1,362.2 L2897.6,369 L2891.1,375.8 M2907.1,362.2 L2913.6,369 L2907.1,375.8 M2923.1,362.2 L2929.6,369 L2923.1,375.8" fill="none" stroke="#3562aa" stroke-width="1.9" opacity="0.85"/>
<rect x="327" y="360.3" width="4" height="17.5" fill="#24529c"/>
<rect x="331" y="354.1" width="3.8" height="29.5" fill="#24529c"/>
<rect x="1925.2" y="354.3" width="7.8" height="29.4" fill="#24529c"/>
<rect x="2241.4" y="354.3" width="7.3" height="29.1" fill="#24529c"/>
<path d="M2935.2,355.7 L2946.5,369 L2935.2,382.3 Z M2949,355.7 L2962.3,369 L2949,382.3 Z" fill="none" stroke="#3562aa" stroke-width="2"/>
<rect x="2961" y="367.8" width="4" height="2.3" fill="#3562aa"/>
<text x="1644.5" y="411.7" font-size="26.7" fill="#2a2a2a" text-anchor="middle" font-weight="normal" >SpliceAI Splice Acceptor Sites, Plus Strand</text>
<g clip-path="url(#lbl)"><text x="35.8" y="537.8" font-size="26.85" fill="#2a2a2a" text-anchor="start" font-weight="normal" >SpliceAI Acceptor Plus</text></g>
<text x="290.5" y="409.5" font-size="25" fill="#2a2a2a" text-anchor="end" font-weight="normal" >1</text>
<rect x="300.2" y="412" width="16.3" height="2" fill="#555"/>
<text x="294" y="665.5" font-size="25.2" fill="#2a2a2a" text-anchor="end" font-weight="normal" >0</text>
<rect x="300.2" y="667.8" width="16.3" height="2" fill="#555"/>
<rect x="325" y="669.8" width="2640" height="2.4" fill="#2b2b2b"/>
<rect x="333.0" y="667.7" width="2" height="3.3" fill="#5a5a5a"/><rect x="342.8" y="666.0" width="2" height="5.0" fill="#5a5a5a"/><rect x="358.7" y="660.0" width="2" height="11.0" fill="#5a5a5a"/><rect x="399.0" y="631.9" width="2" height="39.1" fill="#9a9a9a"/><rect x="399.0" y="662.4" width="2" height="8.6" fill="#555"/><rect x="399.0" y="665.0" width="2" height="6" fill="#222"/><rect x="400.5" y="661.0" width="2" height="10.0" fill="#5a5a5a"/><rect x="814.8" y="668.0" width="2" height="3.0" fill="#5a5a5a"/><rect x="907.0" y="638.3" width="2" height="32.7" fill="#9a9a9a"/><rect x="907.0" y="663.0" width="2" height="8.0" fill="#555"/><rect x="907.0" y="665.0" width="2" height="6" fill="#222"/><rect x="930.8" y="629.8" width="2" height="41.2" fill="#9a9a9a"/><rect x="930.8" y="661.9" width="2" height="9.1" fill="#555"/><rect x="930.8" y="665.0" width="2" height="6" fill="#222"/><rect x="932.6" y="580.1" width="2" height="90.9" fill="#9a9a9a"/><rect x="932.6" y="651.0" width="2" height="20.0" fill="#555"/><rect x="932.6" y="665.0" width="2" height="6" fill="#222"/><rect x="1148.6" y="619.8" width="2" height="51.2" fill="#9a9a9a"/><rect x="1148.6" y="659.7" width="2" height="11.3" fill="#555"/><rect x="1148.6" y="665.0" width="2" height="6" fill="#222"/><rect x="1176.8" y="668.0" width="2" height="3.0" fill="#5a5a5a"/><rect x="1815.0" y="663.9" width="2" height="7.1" fill="#5a5a5a"/><rect x="1872.7" y="661.9" width="2" height="9.1" fill="#5a5a5a"/><rect x="1882.9" y="667.7" width="2" height="3.3" fill="#5a5a5a"/><rect x="1925.2" y="416.7" width="2" height="254.3" fill="#9a9a9a"/><rect x="1925.2" y="615.1" width="2" height="55.9" fill="#555"/><rect x="1925.2" y="665.0" width="2" height="6" fill="#222"/><rect x="1938.8" y="666.5" width="2" height="4.5" fill="#5a5a5a"/><rect x="1984.9" y="661.9" width="2" height="9.1" fill="#5a5a5a"/><rect x="2011.0" y="666.0" width="2" height="5.0" fill="#5a5a5a"/><rect x="2033.0" y="649.8" width="2" height="21.2" fill="#5a5a5a"/><rect x="2101.0" y="668.5" width="2" height="2.5" fill="#5a5a5a"/><rect x="2110.4" y="668.0" width="2" height="3.0" fill="#5a5a5a"/><rect x="2116.8" y="641.6" width="2" height="29.4" fill="#5a5a5a"/><rect x="2124.5" y="649.8" width="2" height="21.2" fill="#5a5a5a"/><rect x="2128.9" y="655.7" width="2" height="15.3" fill="#5a5a5a"/><rect x="2210.9" y="668.0" width="2" height="3.0" fill="#5a5a5a"/><rect x="2241.1" y="439.7" width="2" height="231.3" fill="#9a9a9a"/><rect x="2241.1" y="620.1" width="2" height="50.9" fill="#555"/><rect x="2241.1" y="665.0" width="2" height="6" fill="#222"/><rect x="2374.9" y="584.1" width="2" height="86.9" fill="#9a9a9a"/><rect x="2374.9" y="651.9" width="2" height="19.1" fill="#555"/><rect x="2374.9" y="665.0" width="2" height="6" fill="#222"/><rect x="2379.0" y="668.0" width="2" height="3.0" fill="#5a5a5a"/><rect x="2395.2" y="658.3" width="2" height="12.7" fill="#5a5a5a"/><rect x="2769.0" y="538.4" width="2" height="132.6" fill="#9a9a9a"/><rect x="2769.0" y="641.8" width="2" height="29.2" fill="#555"/><rect x="2769.0" y="665.0" width="2" height="6" fill="#222"/><rect x="2873.3" y="668.0" width="2" height="3.0" fill="#5a5a5a"/>
<text x="1644.5" y="699.7" font-size="26.7" fill="#2a2a2a" text-anchor="middle" font-weight="normal" >SpliceAI Splice Acceptor Sites, Minus Strand</text>
<g clip-path="url(#lbl)"><text x="35.8" y="825.8" font-size="26.85" fill="#2a2a2a" text-anchor="start" font-weight="normal" >SpliceAI Acceptor Minus</text></g>
<text x="290.5" y="697.5" font-size="25" fill="#2a2a2a" text-anchor="end" font-weight="normal" >1</text>
<rect x="300.2" y="700" width="16.3" height="2" fill="#555"/>
<text x="294" y="953.5" font-size="25.2" fill="#2a2a2a" text-anchor="end" font-weight="normal" >0</text>
<rect x="300.2" y="955.8" width="16.3" height="2" fill="#555"/>
<rect x="325" y="957.8" width="2640" height="2.4" fill="#2b2b2b"/>
<rect x="405.1" y="864.5" width="2" height="94.5" fill="#9a9a9a"/><rect x="405.1" y="938.2" width="2" height="20.8" fill="#555"/><rect x="405.1" y="953.0" width="2" height="6" fill="#222"/><rect x="551.1" y="919.8" width="2" height="39.2" fill="#9a9a9a"/><rect x="551.1" y="950.4" width="2" height="8.6" fill="#555"/><rect x="551.1" y="953.0" width="2" height="6" fill="#222"/><rect x="1021.0" y="858.3" width="2" height="100.7" fill="#9a9a9a"/><rect x="1021.0" y="936.8" width="2" height="22.2" fill="#555"/><rect x="1021.0" y="953.0" width="2" height="6" fill="#222"/><rect x="1022.6" y="919.8" width="2" height="39.2" fill="#9a9a9a"/><rect x="1022.6" y="950.4" width="2" height="8.6" fill="#555"/><rect x="1022.6" y="953.0" width="2" height="6" fill="#222"/><rect x="1095.3" y="956.0" width="2" height="3.0" fill="#5a5a5a"/><rect x="1188.6" y="951.6" width="2" height="7.4" fill="#5a5a5a"/><rect x="1242.9" y="945.4" width="2" height="13.6" fill="#5a5a5a"/><rect x="1353.0" y="956.0" width="2" height="3.0" fill="#5a5a5a"/><rect x="1378.7" y="939.8" width="2" height="19.2" fill="#5a5a5a"/><rect x="1480.7" y="870.6" width="2" height="88.4" fill="#9a9a9a"/><rect x="1480.7" y="939.6" width="2" height="19.4" fill="#555"/><rect x="1480.7" y="953.0" width="2" height="6" fill="#222"/><rect x="1490.9" y="928.5" width="2" height="30.5" fill="#9a9a9a"/><rect x="1490.9" y="951.0" width="2" height="8.0" fill="#555"/><rect x="1490.9" y="953.0" width="2" height="6" fill="#222"/><rect x="1956.5" y="942.3" width="2" height="16.7" fill="#5a5a5a"/><rect x="2293.2" y="870.0" width="2" height="89.0" fill="#9a9a9a"/><rect x="2293.2" y="939.4" width="2" height="19.6" fill="#555"/><rect x="2293.2" y="953.0" width="2" height="6" fill="#222"/><rect x="2386.6" y="894.3" width="2" height="64.7" fill="#9a9a9a"/><rect x="2386.6" y="944.8" width="2" height="14.2" fill="#555"/><rect x="2386.6" y="953.0" width="2" height="6" fill="#222"/><rect x="2390.8" y="824.6" width="2" height="134.4" fill="#9a9a9a"/><rect x="2390.8" y="929.4" width="2" height="29.6" fill="#555"/><rect x="2390.8" y="953.0" width="2" height="6" fill="#222"/><rect x="2530.7" y="948.5" width="2" height="10.5" fill="#5a5a5a"/>
<text x="1644.5" y="987.7" font-size="26.7" fill="#2a2a2a" text-anchor="middle" font-weight="normal" >SpliceAI Splice Donor Sites, Plus Strand</text>
<g clip-path="url(#lbl)"><text x="35.8" y="1113.8" font-size="26.85" fill="#2a2a2a" text-anchor="start" font-weight="normal" >SpliceAI Donor Plus</text></g>
<text x="290.5" y="985.5" font-size="25" fill="#2a2a2a" text-anchor="end" font-weight="normal" >1</text>
<rect x="300.2" y="988" width="16.3" height="2" fill="#555"/>
<text x="294" y="1241.5" font-size="25.2" fill="#2a2a2a" text-anchor="end" font-weight="normal" >0</text>
<rect x="300.2" y="1243.8" width="16.3" height="2" fill="#555"/>
<rect x="325" y="1245.8" width="2640" height="2.4" fill="#2b2b2b"/>
<rect x="332.8" y="1180.1" width="2" height="66.9" fill="#9a9a9a"/><rect x="332.8" y="1232.3" width="2" height="14.7" fill="#555"/><rect x="332.8" y="1241.0" width="2" height="6" fill="#222"/><rect x="350.8" y="1226.2" width="2" height="20.8" fill="#5a5a5a"/><rect x="365.1" y="1223.7" width="2" height="23.3" fill="#5a5a5a"/><rect x="569.0" y="1244.0" width="2" height="3.0" fill="#5a5a5a"/><rect x="912.9" y="1226.2" width="2" height="20.8" fill="#5a5a5a"/><rect x="939.0" y="1065.8" width="2" height="181.2" fill="#9a9a9a"/><rect x="939.0" y="1207.1" width="2" height="39.9" fill="#555"/><rect x="939.0" y="1241.0" width="2" height="6" fill="#222"/><rect x="1152.7" y="1233.9" width="2" height="13.1" fill="#5a5a5a"/><rect x="1886.8" y="1224.0" width="2" height="23.0" fill="#5a5a5a"/><rect x="1933.3" y="991.7" width="2" height="255.3" fill="#9a9a9a"/><rect x="1933.3" y="1190.8" width="2" height="56.2" fill="#555"/><rect x="1933.3" y="1241.0" width="2" height="6" fill="#222"/><rect x="1989.0" y="1234.4" width="2" height="12.6" fill="#5a5a5a"/><rect x="2021.0" y="1232.3" width="2" height="14.7" fill="#5a5a5a"/><rect x="2039.2" y="1234.4" width="2" height="12.6" fill="#5a5a5a"/><rect x="2122.8" y="1118.2" width="2" height="128.8" fill="#9a9a9a"/><rect x="2122.8" y="1218.7" width="2" height="28.3" fill="#555"/><rect x="2122.8" y="1241.0" width="2" height="6" fill="#222"/><rect x="2143.4" y="1198.2" width="2" height="48.8" fill="#9a9a9a"/><rect x="2143.4" y="1236.3" width="2" height="10.7" fill="#555"/><rect x="2143.4" y="1241.0" width="2" height="6" fill="#222"/><rect x="2215.2" y="1235.9" width="2" height="11.1" fill="#5a5a5a"/><rect x="2247.2" y="1028.3" width="2" height="218.7" fill="#9a9a9a"/><rect x="2247.2" y="1198.9" width="2" height="48.1" fill="#555"/><rect x="2247.2" y="1241.0" width="2" height="6" fill="#222"/><rect x="2330.9" y="1244.0" width="2" height="3.0" fill="#5a5a5a"/><rect x="2407.3" y="1118.2" width="2" height="128.8" fill="#9a9a9a"/><rect x="2407.3" y="1218.7" width="2" height="28.3" fill="#555"/><rect x="2407.3" y="1241.0" width="2" height="6" fill="#222"/><rect x="2777.0" y="1141.9" width="2" height="105.1" fill="#9a9a9a"/><rect x="2777.0" y="1223.9" width="2" height="23.1" fill="#555"/><rect x="2777.0" y="1241.0" width="2" height="6" fill="#222"/>
<text x="1644.5" y="1275.7" font-size="26.7" fill="#2a2a2a" text-anchor="middle" font-weight="normal" >SpliceAI Splice Donor Sites, Minus Strand</text>
<g clip-path="url(#lbl)"><text x="35.8" y="1401.8" font-size="26.85" fill="#2a2a2a" text-anchor="start" font-weight="normal" >SpliceAI Donor Minus</text></g>
<text x="290.5" y="1273.5" font-size="25" fill="#2a2a2a" text-anchor="end" font-weight="normal" >1</text>
<rect x="300.2" y="1276" width="16.3" height="2" fill="#555"/>
<text x="294" y="1529.5" font-size="25.2" fill="#2a2a2a" text-anchor="end" font-weight="normal" >0</text>
<rect x="300.2" y="1531.8" width="16.3" height="2" fill="#555"/>
<rect x="325" y="1533.8" width="2640" height="2.4" fill="#2b2b2b"/>
<rect x="354.9" y="1532.0" width="2" height="3.0" fill="#5a5a5a"/><rect x="547.0" y="1498.4" width="2" height="36.6" fill="#9a9a9a"/><rect x="547.0" y="1526.9" width="2" height="8.1" fill="#555"/><rect x="547.0" y="1529.0" width="2" height="6" fill="#222"/><rect x="1008.7" y="1379.5" width="2" height="155.5" fill="#9a9a9a"/><rect x="1008.7" y="1500.8" width="2" height="34.2" fill="#555"/><rect x="1008.7" y="1529.0" width="2" height="6" fill="#222"/><rect x="1086.6" y="1527.6" width="2" height="7.4" fill="#5a5a5a"/><rect x="1373.0" y="1525.6" width="2" height="9.4" fill="#5a5a5a"/><rect x="1460.7" y="1532.0" width="2" height="3.0" fill="#5a5a5a"/><rect x="1502.7" y="1532.0" width="2" height="3.0" fill="#5a5a5a"/><rect x="1866.7" y="1527.6" width="2" height="7.4" fill="#5a5a5a"/><rect x="2138.8" y="1532.0" width="2" height="3.0" fill="#5a5a5a"/><rect x="2284.4" y="1446.0" width="2" height="89.0" fill="#9a9a9a"/><rect x="2284.4" y="1515.4" width="2" height="19.6" fill="#555"/><rect x="2284.4" y="1529.0" width="2" height="6" fill="#222"/><rect x="2321.0" y="1526.0" width="2" height="9.0" fill="#5a5a5a"/><rect x="2374.7" y="1506.4" width="2" height="28.6" fill="#5a5a5a"/><rect x="2515.2" y="1532.0" width="2" height="3.0" fill="#5a5a5a"/>
<text x="1644.9" y="1561.7" font-size="21.6" fill="#2a2a2a" text-anchor="middle" font-weight="normal" >SpliceAI: Splice Variant Prediction Score</text>
<text x="313.6" y="1591.7" font-size="26.6" fill="#2a2a2a" text-anchor="end" font-weight="normal" >SpliceAI SNVs</text>
<text x="313.6" y="1624.1" font-size="26.6" fill="#2a2a2a" text-anchor="end" font-weight="normal" >SpliceAI indels</text>
<rect x="324.9" y="1574" width="46.0" height="18" fill="#0000ff"/><rect x="397.1" y="1574" width="15.7" height="18" fill="#0000ff"/><rect x="435.1" y="1574" width="1.9" height="18" fill="#0000ff"/><rect x="445.2" y="1574" width="1.9" height="18" fill="#0000ff"/><rect x="478.8" y="1574" width="6.2" height="18" fill="#0000ff"/><rect x="493.3" y="1574" width="1.8" height="18" fill="#808080"/><rect x="519.0" y="1574" width="5.8" height="18" fill="#0000ff"/><rect x="558.7" y="1574" width="14.2" height="18" fill="#0000ff"/><rect x="583.0" y="1574" width="2.0" height="18" fill="#0000ff"/><rect x="749.0" y="1574" width="5.8" height="18" fill="#0000ff"/><rect x="779.0" y="1574" width="1.8" height="18" fill="#0000ff"/><rect x="786.8" y="1574" width="7.2" height="18" fill="#0000ff"/><rect x="795.5" y="1574" width="5.5" height="18" fill="#0000ff"/><rect x="813.0" y="1574" width="16.0" height="18" fill="#0000ff"/><rect x="837.2" y="1574" width="1.8" height="18" fill="#0000ff"/><rect x="844.8" y="1574" width="2.1" height="18" fill="#0000ff"/><rect x="905.6" y="1574" width="13.5" height="18" fill="#0000ff"/><rect x="927.3" y="1574" width="2.1" height="18" fill="#0000ff"/><rect x="929.4" y="1574" width="3.3" height="18" fill="#808080"/><rect x="932.7" y="1574" width="9.0" height="18" fill="#f29a52"/><rect x="941.7" y="1574" width="3.1" height="18" fill="#0000ff"/><rect x="953.0" y="1574" width="2.0" height="18" fill="#0000ff"/><rect x="982.7" y="1574" width="1.8" height="18" fill="#0000ff"/><rect x="987.0" y="1574" width="2.0" height="18" fill="#0000ff"/><rect x="997.3" y="1574" width="3.7" height="18" fill="#0000ff"/><rect x="1065.0" y="1574" width="2.2" height="18" fill="#0000ff"/><rect x="1147.2" y="1574" width="15.3" height="18" fill="#0000ff"/><rect x="1166.9" y="1574" width="2.1" height="18" fill="#0000ff"/><rect x="1177.1" y="1574" width="5.9" height="18" fill="#0000ff"/><rect x="1192.8" y="1574" width="2.2" height="18" fill="#0000ff"/><rect x="1215.0" y="1574" width="2.0" height="18" fill="#0000ff"/><rect x="1222.7" y="1574" width="2.0" height="18" fill="#0000ff"/><rect x="1228.6" y="1574" width="2.0" height="18" fill="#0000ff"/><rect x="1238.9" y="1574" width="2.3" height="18" fill="#0000ff"/><rect x="1302.7" y="1574" width="10.3" height="18" fill="#0000ff"/><rect x="1416.7" y="1574" width="2.0" height="18" fill="#0000ff"/><rect x="1425.0" y="1574" width="2.0" height="18" fill="#0000ff"/><rect x="1429.0" y="1574" width="1.8" height="18" fill="#0000ff"/><rect x="1436.7" y="1574" width="6.3" height="18" fill="#0000ff"/><rect x="1447.0" y="1574" width="2.5" height="18" fill="#0000ff"/><rect x="1465.4" y="1574" width="2.0" height="18" fill="#0000ff"/><rect x="1484.6" y="1574" width="2.6" height="18" fill="#0000ff"/><rect x="1567.3" y="1574" width="5.7" height="18" fill="#0000ff"/><rect x="1573.0" y="1574" width="3.8" height="18" fill="#f29a52"/><rect x="1591.0" y="1574" width="2.0" height="18" fill="#808080"/><rect x="1594.8" y="1574" width="4.3" height="18" fill="#0000ff"/><rect x="1664.7" y="1574" width="2.1" height="18" fill="#0000ff"/><rect x="1673.0" y="1574" width="2.0" height="18" fill="#808080"/><rect x="1727.2" y="1574" width="7.7" height="18" fill="#0000ff"/><rect x="1771.5" y="1574" width="1.8" height="18" fill="#0000ff"/><rect x="1776.7" y="1574" width="2.5" height="18" fill="#0000ff"/><rect x="1782.6" y="1574" width="2.0" height="18" fill="#0000ff"/><rect x="1790.8" y="1574" width="2.0" height="18" fill="#f29a52"/><rect x="1795.4" y="1574" width="3.6" height="18" fill="#0000ff"/><rect x="1805.6" y="1574" width="2.6" height="18" fill="#0000ff"/><rect x="1812.5" y="1574" width="7.7" height="18" fill="#0000ff"/><rect x="1826.0" y="1574" width="4.5" height="18" fill="#0000ff"/><rect x="1839.0" y="1574" width="2.0" height="18" fill="#0000ff"/><rect x="1843.0" y="1574" width="2.0" height="18" fill="#808080"/><rect x="1849.0" y="1574" width="2.0" height="18" fill="#0000ff"/><rect x="1871.5" y="1574" width="21.2" height="18" fill="#0000ff"/><rect x="1919.4" y="1574" width="31.5" height="18" fill="#0000ff"/><rect x="1967.0" y="1574" width="3.0" height="18" fill="#0000ff"/><rect x="1972.5" y="1574" width="4.0" height="18" fill="#0000ff"/><rect x="1983.4" y="1574" width="13.1" height="18" fill="#0000ff"/><rect x="2005.5" y="1574" width="10.5" height="18" fill="#0000ff"/><rect x="2018.0" y="1574" width="9.0" height="18" fill="#0000ff"/><rect x="2029.0" y="1574" width="14.1" height="18" fill="#0000ff"/><rect x="2059.3" y="1574" width="2.3" height="18" fill="#0000ff"/><rect x="2064.9" y="1574" width="6.4" height="18" fill="#0000ff"/><rect x="2075.2" y="1574" width="1.8" height="18" fill="#0000ff"/><rect x="2084.9" y="1574" width="22.4" height="18" fill="#0000ff"/><rect x="2109.0" y="1574" width="39.7" height="18" fill="#0000ff"/><rect x="2156.9" y="1574" width="2.0" height="18" fill="#0000ff"/><rect x="2167.0" y="1574" width="3.5" height="18" fill="#0000ff"/><rect x="2180.7" y="1574" width="3.9" height="18" fill="#0000ff"/><rect x="2211.0" y="1574" width="9.4" height="18" fill="#0000ff"/><rect x="2231.2" y="1574" width="1.8" height="18" fill="#f29a52"/><rect x="2235.0" y="1574" width="17.4" height="18" fill="#0000ff"/><rect x="2258.9" y="1574" width="2.0" height="18" fill="#0000ff"/><rect x="2273.5" y="1574" width="3.3" height="18" fill="#0000ff"/><rect x="2282.7" y="1574" width="1.8" height="18" fill="#f29a52"/><rect x="2289.0" y="1574" width="3.7" height="18" fill="#0000ff"/><rect x="2308.8" y="1574" width="2.1" height="18" fill="#0000ff"/><rect x="2326.8" y="1574" width="7.6" height="18" fill="#0000ff"/><rect x="2340.8" y="1574" width="2.1" height="18" fill="#0000ff"/><rect x="2360.8" y="1574" width="8.2" height="18" fill="#0000ff"/><rect x="2372.9" y="1574" width="39.7" height="18" fill="#0000ff"/><rect x="2419.0" y="1574" width="1.8" height="18" fill="#0000ff"/><rect x="2486.9" y="1574" width="2.0" height="18" fill="#0000ff"/><rect x="2579.1" y="1574" width="7.7" height="18" fill="#0000ff"/><rect x="2595.0" y="1574" width="2.0" height="18" fill="#808080"/><rect x="2650.9" y="1574" width="2.0" height="18" fill="#0000ff"/><rect x="2737.2" y="1574" width="2.0" height="18" fill="#0000ff"/><rect x="2755.0" y="1574" width="1.9" height="18" fill="#0000ff"/><rect x="2759.0" y="1574" width="1.8" height="18" fill="#0000ff"/><rect x="2765.1" y="1574" width="17.5" height="18" fill="#0000ff"/><rect x="2788.8" y="1574" width="1.9" height="18" fill="#0000ff"/><rect x="2795.0" y="1574" width="1.8" height="18" fill="#0000ff"/><rect x="2803.0" y="1574" width="1.9" height="18" fill="#0000ff"/><rect x="2807.0" y="1574" width="1.9" height="18" fill="#0000ff"/><rect x="2811.0" y="1574" width="1.9" height="18" fill="#0000ff"/><rect x="2817.0" y="1574" width="1.9" height="18" fill="#0000ff"/><rect x="2871.2" y="1574" width="7.6" height="18" fill="#0000ff"/><rect x="2882.8" y="1574" width="2.2" height="18" fill="#f29a52"/><rect x="2918.8" y="1574" width="2.2" height="18" fill="#0000ff"/><rect x="2954.8" y="1574" width="2.1" height="18" fill="#0000ff"/><rect x="334.6" y="1574" width="1.8" height="18" fill="#f29a52"/><rect x="338.5" y="1574" width="1.8" height="18" fill="#808080"/><rect x="341.4" y="1574" width="1.8" height="18" fill="#808080"/><rect x="356.9" y="1574" width="1.8" height="18" fill="#808080"/><rect x="398.7" y="1574" width="1.8" height="18" fill="#f29a52"/><rect x="407.4" y="1574" width="1.8" height="18" fill="#808080"/><rect x="483.1" y="1574" width="1.8" height="18" fill="#f29a52"/><rect x="566.6" y="1574" width="1.8" height="18" fill="#808080"/><rect x="569.5" y="1574" width="1.8" height="18" fill="#808080"/><rect x="752.9" y="1574" width="1.8" height="18" fill="#f29a52"/><rect x="1148.1" y="1574" width="1.8" height="18" fill="#808080"/><rect x="1159.1" y="1574" width="1.8" height="18" fill="#808080"/><rect x="1304.1" y="1574" width="1.8" height="18" fill="#808080"/><rect x="1309.1" y="1574" width="1.8" height="18" fill="#808080"/><rect x="1439.1" y="1574" width="1.8" height="18" fill="#f29a52"/><rect x="1571.1" y="1574" width="1.8" height="18" fill="#f29a52"/><rect x="1574.1" y="1574" width="1.8" height="18" fill="#f29a52"/><rect x="1596.1" y="1574" width="1.8" height="18" fill="#f29a52"/><rect x="1732.1" y="1574" width="1.8" height="18" fill="#f29a52"/><rect x="1796.1" y="1574" width="1.8" height="18" fill="#808080"/><rect x="1827.6" y="1574" width="1.8" height="18" fill="#f29a52"/><rect x="1881.1" y="1574" width="1.8" height="18" fill="#808080"/><rect x="1918.6" y="1574" width="1.8" height="18" fill="#808080"/><rect x="1927.1" y="1574" width="1.8" height="18" fill="#f29a52"/><rect x="1939.1" y="1574" width="1.8" height="18" fill="#808080"/><rect x="1949.1" y="1574" width="1.8" height="18" fill="#808080"/><rect x="2031.1" y="1574" width="1.8" height="18" fill="#808080"/><rect x="2035.1" y="1574" width="1.8" height="18" fill="#808080"/><rect x="2039.1" y="1574" width="1.8" height="18" fill="#808080"/><rect x="2119.1" y="1574" width="1.8" height="18" fill="#f29a52"/><rect x="2244.6" y="1574" width="1.8" height="18" fill="#f29a52"/><rect x="2372.0" y="1574" width="1.8" height="18" fill="#f29a52"/><rect x="2383.6" y="1574" width="1.8" height="18" fill="#f29a52"/><rect x="2391.1" y="1574" width="1.8" height="18" fill="#f29a52"/><rect x="2405.1" y="1574" width="1.8" height="18" fill="#808080"/><rect x="2326.1" y="1574" width="1.8" height="18" fill="#808080"/><rect x="2768.6" y="1574" width="1.8" height="18" fill="#808080"/><rect x="2772.1" y="1574" width="1.8" height="18" fill="#808080"/><rect x="2776.6" y="1574" width="1.8" height="18" fill="#f29a52"/><rect x="2779.1" y="1574" width="1.8" height="18" fill="#808080"/>
<rect x="324.9" y="1606.2" width="46.0" height="17.8" fill="#0000ff"/><rect x="397.0" y="1606.2" width="18.0" height="17.8" fill="#0000ff"/><rect x="424.8" y="1606.2" width="2.0" height="17.8" fill="#0000ff"/><rect x="430.6" y="1606.2" width="2.0" height="17.8" fill="#0000ff"/><rect x="443.3" y="1606.2" width="1.8" height="17.8" fill="#f29a52"/><rect x="478.8" y="1606.2" width="7.7" height="17.8" fill="#0000ff"/><rect x="490.8" y="1606.2" width="3.9" height="17.8" fill="#0000ff"/><rect x="519.0" y="1606.2" width="5.8" height="17.8" fill="#0000ff"/><rect x="528.7" y="1606.2" width="1.9" height="17.8" fill="#0000ff"/><rect x="558.7" y="1606.2" width="14.2" height="17.8" fill="#0000ff"/><rect x="578.7" y="1606.2" width="2.0" height="17.8" fill="#0000ff"/><rect x="583.0" y="1606.2" width="2.0" height="17.8" fill="#0000ff"/><rect x="679.0" y="1606.2" width="1.8" height="17.8" fill="#0000ff"/><rect x="722.8" y="1606.2" width="1.9" height="17.8" fill="#0000ff"/><rect x="743.1" y="1606.2" width="3.9" height="17.8" fill="#0000ff"/><rect x="748.5" y="1606.2" width="8.2" height="17.8" fill="#0000ff"/><rect x="786.8" y="1606.2" width="7.2" height="17.8" fill="#0000ff"/><rect x="795.5" y="1606.2" width="5.5" height="17.8" fill="#0000ff"/><rect x="812.8" y="1606.2" width="8.7" height="17.8" fill="#0000ff"/><rect x="823.0" y="1606.2" width="6.0" height="17.8" fill="#0000ff"/><rect x="837.2" y="1606.2" width="1.8" height="17.8" fill="#808080"/><rect x="843.0" y="1606.2" width="1.8" height="17.8" fill="#0000ff"/><rect x="851.0" y="1606.2" width="2.3" height="17.8" fill="#0000ff"/><rect x="905.0" y="1606.2" width="7.5" height="17.8" fill="#0000ff"/><rect x="914.0" y="1606.2" width="7.0" height="17.8" fill="#0000ff"/><rect x="927.3" y="1606.2" width="5.7" height="17.8" fill="#808080"/><rect x="933.0" y="1606.2" width="2.0" height="17.8" fill="#f29a52"/><rect x="935.0" y="1606.2" width="2.0" height="17.8" fill="#0000ff"/><rect x="937.5" y="1606.2" width="1.8" height="17.8" fill="#808080"/><rect x="939.0" y="1606.2" width="2.0" height="17.8" fill="#0000ff"/><rect x="941.0" y="1606.2" width="2.0" height="17.8" fill="#808080"/><rect x="943.0" y="1606.2" width="1.8" height="17.8" fill="#0000ff"/><rect x="953.0" y="1606.2" width="2.0" height="17.8" fill="#0000ff"/><rect x="989.0" y="1606.2" width="2.0" height="17.8" fill="#0000ff"/><rect x="994.7" y="1606.2" width="2.1" height="17.8" fill="#0000ff"/><rect x="998.6" y="1606.2" width="2.4" height="17.8" fill="#0000ff"/><rect x="1023.0" y="1606.2" width="2.0" height="17.8" fill="#0000ff"/><rect x="1057.0" y="1606.2" width="4.5" height="17.8" fill="#0000ff"/><rect x="1063.0" y="1606.2" width="6.0" height="17.8" fill="#0000ff"/><rect x="1080.6" y="1606.2" width="3.4" height="17.8" fill="#0000ff"/><rect x="1085.5" y="1606.2" width="3.5" height="17.8" fill="#0000ff"/><rect x="1147.2" y="1606.2" width="15.3" height="17.8" fill="#0000ff"/><rect x="1175.3" y="1606.2" width="9.7" height="17.8" fill="#0000ff"/><rect x="1187.0" y="1606.2" width="3.0" height="17.8" fill="#0000ff"/><rect x="1191.5" y="1606.2" width="3.1" height="17.8" fill="#0000ff"/><rect x="1215.0" y="1606.2" width="2.0" height="17.8" fill="#0000ff"/><rect x="1225.3" y="1606.2" width="2.0" height="17.8" fill="#0000ff"/><rect x="1229.0" y="1606.2" width="6.5" height="17.8" fill="#0000ff"/><rect x="1238.9" y="1606.2" width="2.3" height="17.8" fill="#0000ff"/><rect x="1251.0" y="1606.2" width="2.0" height="17.8" fill="#0000ff"/><rect x="1256.6" y="1606.2" width="2.0" height="17.8" fill="#808080"/><rect x="1264.3" y="1606.2" width="2.0" height="17.8" fill="#0000ff"/><rect x="1291.4" y="1606.2" width="1.8" height="17.8" fill="#0000ff"/><rect x="1303.5" y="1606.2" width="4.0" height="17.8" fill="#0000ff"/><rect x="1309.0" y="1606.2" width="4.0" height="17.8" fill="#0000ff"/><rect x="1394.4" y="1606.2" width="2.1" height="17.8" fill="#0000ff"/><rect x="1406.4" y="1606.2" width="2.0" height="17.8" fill="#0000ff"/><rect x="1411.0" y="1606.2" width="2.0" height="17.8" fill="#0000ff"/><rect x="1415.0" y="1606.2" width="2.5" height="17.8" fill="#0000ff"/><rect x="1429.0" y="1606.2" width="2.0" height="17.8" fill="#0000ff"/><rect x="1435.0" y="1606.2" width="8.5" height="17.8" fill="#0000ff"/><rect x="1447.0" y="1606.2" width="2.5" height="17.8" fill="#0000ff"/><rect x="1484.6" y="1606.2" width="2.6" height="17.8" fill="#f29a52"/><rect x="1567.3" y="1606.2" width="5.7" height="17.8" fill="#0000ff"/><rect x="1574.5" y="1606.2" width="1.8" height="17.8" fill="#0000ff"/><rect x="1578.0" y="1606.2" width="2.0" height="17.8" fill="#0000ff"/><rect x="1585.0" y="1606.2" width="2.0" height="17.8" fill="#0000ff"/><rect x="1590.0" y="1606.2" width="2.0" height="17.8" fill="#0000ff"/><rect x="1597.0" y="1606.2" width="2.0" height="17.8" fill="#f29a52"/><rect x="1631.1" y="1606.2" width="5.9" height="17.8" fill="#0000ff"/><rect x="1649.0" y="1606.2" width="2.0" height="17.8" fill="#0000ff"/><rect x="1652.4" y="1606.2" width="2.6" height="17.8" fill="#0000ff"/><rect x="1665.2" y="1606.2" width="2.1" height="17.8" fill="#0000ff"/><rect x="1670.9" y="1606.2" width="2.0" height="17.8" fill="#f29a52"/><rect x="1682.6" y="1606.2" width="2.6" height="17.8" fill="#0000ff"/><rect x="1696.7" y="1606.2" width="2.3" height="17.8" fill="#0000ff"/><rect x="1725.4" y="1606.2" width="7.7" height="17.8" fill="#0000ff"/><rect x="1772.8" y="1606.2" width="2.1" height="17.8" fill="#0000ff"/><rect x="1776.7" y="1606.2" width="8.4" height="17.8" fill="#0000ff"/><rect x="1792.8" y="1606.2" width="4.4" height="17.8" fill="#0000ff"/><rect x="1807.4" y="1606.2" width="1.8" height="17.8" fill="#0000ff"/><rect x="1813.3" y="1606.2" width="8.2" height="17.8" fill="#0000ff"/><rect x="1822.8" y="1606.2" width="14.1" height="17.8" fill="#0000ff"/><rect x="1843.3" y="1606.2" width="3.8" height="17.8" fill="#0000ff"/><rect x="1871.0" y="1606.2" width="21.7" height="17.8" fill="#0000ff"/><rect x="1895.8" y="1606.2" width="2.1" height="17.8" fill="#0000ff"/><rect x="1903.0" y="1606.2" width="2.3" height="17.8" fill="#0000ff"/><rect x="1918.9" y="1606.2" width="32.0" height="17.8" fill="#0000ff"/><rect x="1967.0" y="1606.2" width="9.5" height="17.8" fill="#0000ff"/><rect x="1983.4" y="1606.2" width="13.6" height="17.8" fill="#0000ff"/><rect x="2006.0" y="1606.2" width="38.4" height="17.8" fill="#0000ff"/><rect x="2059.3" y="1606.2" width="12.0" height="17.8" fill="#0000ff"/><rect x="2075.2" y="1606.2" width="3.8" height="17.8" fill="#0000ff"/><rect x="2087.5" y="1606.2" width="47.0" height="17.8" fill="#0000ff"/><rect x="2137.0" y="1606.2" width="11.7" height="17.8" fill="#0000ff"/><rect x="2161.0" y="1606.2" width="1.8" height="17.8" fill="#0000ff"/><rect x="2164.6" y="1606.2" width="6.6" height="17.8" fill="#0000ff"/><rect x="2176.9" y="1606.2" width="7.7" height="17.8" fill="#0000ff"/><rect x="2208.9" y="1606.2" width="11.5" height="17.8" fill="#0000ff"/><rect x="2226.8" y="1606.2" width="1.8" height="17.8" fill="#0000ff"/><rect x="2231.2" y="1606.2" width="21.2" height="17.8" fill="#0000ff"/><rect x="2258.9" y="1606.2" width="2.0" height="17.8" fill="#808080"/><rect x="2269.0" y="1606.2" width="2.0" height="17.8" fill="#0000ff"/><rect x="2273.0" y="1606.2" width="6.4" height="17.8" fill="#0000ff"/><rect x="2283.2" y="1606.2" width="5.8" height="17.8" fill="#0000ff"/><rect x="2301.0" y="1606.2" width="2.0" height="17.8" fill="#0000ff"/><rect x="2322.9" y="1606.2" width="2.1" height="17.8" fill="#0000ff"/><rect x="2326.8" y="1606.2" width="7.6" height="17.8" fill="#0000ff"/><rect x="2340.8" y="1606.2" width="2.1" height="17.8" fill="#0000ff"/><rect x="2344.7" y="1606.2" width="2.0" height="17.8" fill="#0000ff"/><rect x="2360.8" y="1606.2" width="52.3" height="17.8" fill="#0000ff"/><rect x="2419.0" y="1606.2" width="1.8" height="17.8" fill="#0000ff"/><rect x="2450.5" y="1606.2" width="2.0" height="17.8" fill="#0000ff"/><rect x="2486.9" y="1606.2" width="2.0" height="17.8" fill="#0000ff"/><rect x="2515.0" y="1606.2" width="4.0" height="17.8" fill="#0000ff"/><rect x="2580.4" y="1606.2" width="6.4" height="17.8" fill="#0000ff"/><rect x="2595.0" y="1606.2" width="2.0" height="17.8" fill="#808080"/><rect x="2600.9" y="1606.2" width="3.8" height="17.8" fill="#0000ff"/><rect x="2620.9" y="1606.2" width="1.8" height="17.8" fill="#0000ff"/><rect x="2647.0" y="1606.2" width="1.8" height="17.8" fill="#0000ff"/><rect x="2650.9" y="1606.2" width="2.0" height="17.8" fill="#0000ff"/><rect x="2668.8" y="1606.2" width="3.8" height="17.8" fill="#0000ff"/><rect x="2714.9" y="1606.2" width="2.1" height="17.8" fill="#0000ff"/><rect x="2725.2" y="1606.2" width="1.8" height="17.8" fill="#0000ff"/><rect x="2736.7" y="1606.2" width="3.8" height="17.8" fill="#0000ff"/><rect x="2750.8" y="1606.2" width="3.9" height="17.8" fill="#0000ff"/><rect x="2765.1" y="1606.2" width="17.5" height="17.8" fill="#0000ff"/><rect x="2787.1" y="1606.2" width="9.7" height="17.8" fill="#0000ff"/><rect x="2803.0" y="1606.2" width="9.9" height="17.8" fill="#0000ff"/><rect x="2815.3" y="1606.2" width="3.3" height="17.8" fill="#0000ff"/><rect x="2871.2" y="1606.2" width="9.5" height="17.8" fill="#0000ff"/><rect x="2883.0" y="1606.2" width="2.0" height="17.8" fill="#0000ff"/><rect x="2909.1" y="1606.2" width="1.9" height="17.8" fill="#0000ff"/><rect x="2938.9" y="1606.2" width="1.9" height="17.8" fill="#0000ff"/><rect x="2954.8" y="1606.2" width="1.9" height="17.8" fill="#0000ff"/><rect x="2959.0" y="1606.2" width="1.9" height="17.8" fill="#0000ff"/><rect x="752.5" y="1606.2" width="1.8" height="17.8" fill="#f29a52"/><rect x="334.6" y="1606.2" width="1.8" height="17.8" fill="#808080"/><rect x="349.1" y="1606.2" width="1.8" height="17.8" fill="#808080"/><rect x="358.9" y="1606.2" width="1.8" height="17.8" fill="#808080"/><rect x="362.8" y="1606.2" width="1.8" height="17.8" fill="#808080"/><rect x="401.1" y="1606.2" width="1.8" height="17.8" fill="#808080"/><rect x="404.9" y="1606.2" width="1.8" height="17.8" fill="#f29a52"/><rect x="408.6" y="1606.2" width="1.8" height="17.8" fill="#808080"/><rect x="411.1" y="1606.2" width="1.8" height="17.8" fill="#f29a52"/><rect x="413.1" y="1606.2" width="1.8" height="17.8" fill="#808080"/><rect x="1149.1" y="1606.2" width="1.8" height="17.8" fill="#f29a52"/><rect x="1150.6" y="1606.2" width="1.8" height="17.8" fill="#f29a52"/><rect x="1160.1" y="1606.2" width="1.8" height="17.8" fill="#808080"/><rect x="522.5" y="1606.2" width="1.8" height="17.8" fill="#f29a52"/><rect x="493.1" y="1606.2" width="1.8" height="17.8" fill="#808080"/><rect x="1598.1" y="1606.2" width="1.8" height="17.8" fill="#f29a52"/><rect x="1909.1" y="1606.2" width="1.8" height="17.8" fill="#808080"/><rect x="1948.1" y="1606.2" width="1.8" height="17.8" fill="#f29a52"/><rect x="2009.1" y="1606.2" width="1.8" height="17.8" fill="#808080"/><rect x="2062.1" y="1606.2" width="1.8" height="17.8" fill="#f29a52"/><rect x="2065.1" y="1606.2" width="1.8" height="17.8" fill="#808080"/><rect x="2122.6" y="1606.2" width="1.8" height="17.8" fill="#f29a52"/><rect x="2215.1" y="1606.2" width="1.8" height="17.8" fill="#f29a52"/><rect x="2234.1" y="1606.2" width="1.8" height="17.8" fill="#808080"/><rect x="2239.1" y="1606.2" width="1.8" height="17.8" fill="#808080"/><rect x="2243.1" y="1606.2" width="1.8" height="17.8" fill="#808080"/><rect x="2247.1" y="1606.2" width="1.8" height="17.8" fill="#808080"/><rect x="2375.1" y="1606.2" width="1.8" height="17.8" fill="#f29a52"/><rect x="2385.1" y="1606.2" width="1.8" height="17.8" fill="#f29a52"/><rect x="2403.1" y="1606.2" width="1.8" height="17.8" fill="#808080"/><rect x="2408.1" y="1606.2" width="1.8" height="17.8" fill="#808080"/><rect x="2770.6" y="1606.2" width="1.8" height="17.8" fill="#f29a52"/><rect x="2775.1" y="1606.2" width="1.8" height="17.8" fill="#f29a52"/><rect x="2772.6" y="1606.2" width="1.8" height="17.8" fill="#808080"/><rect x="2777.6" y="1606.2" width="1.8" height="17.8" fill="#808080"/><rect x="2793.1" y="1606.2" width="1.8" height="17.8" fill="#f29a52"/><rect x="2817.1" y="1606.2" width="1.8" height="17.8" fill="#808080"/><rect x="1310.1" y="1606.2" width="1.8" height="17.8" fill="#808080"/><rect x="1414.1" y="1606.2" width="1.8" height="17.8" fill="#808080"/><rect x="1438.1" y="1606.2" width="1.8" height="17.8" fill="#f29a52"/>
</svg></body></html>
